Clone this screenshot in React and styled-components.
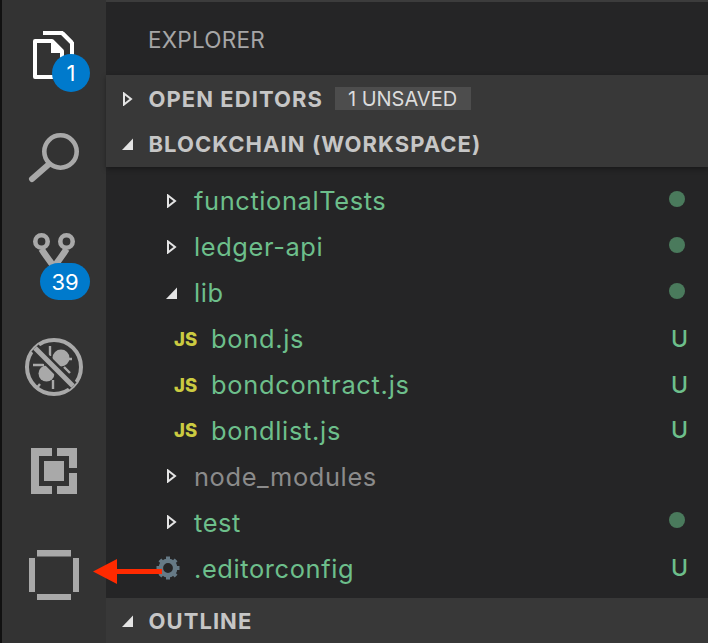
import React from "react";
import styled, { createGlobalStyle } from "styled-components";

const Global = createGlobalStyle`
  html, body { margin: 0; padding: 0; width: 708px; height: 643px; overflow: hidden; background: #252526; }
  #root { width: 708px; height: 643px; }
  * { box-sizing: border-box; }
`;

const Window = styled.div`
  position: relative;
  display: flex;
  width: 708px;
  height: 643px;
  font-family: Inter, "Liberation Sans", sans-serif;
`;

const ActivityBar = styled.nav`
  width: 106px;
  height: 100%;
  flex: none;
  background: #333333;
  border-left: 2px solid #111111;
  margin: 0;
  padding-top: 3px;
  display: flex;
  flex-direction: column;
`;

const ActivityItem = styled.div`
  position: relative;
  height: 104px;
  flex: none;
  margin-left: -2px;
`;

const Glyph = styled.svg`
  position: absolute;
  left: 23px;
  top: 22px;
  width: 60px;
  height: 60px;
  display: block;
`;

const Badge = styled.span`
  position: absolute;
  left: ${(p) => p.$left}px;
  top: ${(p) => p.$top}px;
  width: ${(p) => p.$width}px;
  height: ${(p) => p.$height}px;
  border-radius: 19px;
  background: #007acc;
  color: #ffffff;
  font-size: 22px;
  display: flex;
  align-items: center;
  justify-content: center;
`;

const Sidebar = styled.aside`
  flex: 1;
  min-width: 0;
  height: 100%;
  background: #252526;
  border-top: 2px solid #3c3c3c;
  display: flex;
  flex-direction: column;
`;

const Title = styled.h1`
  margin: 0;
  height: 73px;
  flex: none;
  padding: 2px 0 0 42px;
  display: flex;
  align-items: center;
  font-size: 22.5px;
  font-weight: 400;
  letter-spacing: 0.25px;
  color: #a6a6a6;
`;

const SectionGroup = styled.div`
  background: #383838;
  flex: none;
  padding-top: 1px;
  box-shadow: 0 2px 5px rgba(0, 0, 0, 0.35);
`;

const SectionHeader = styled.div`
  height: 45.5px;
  display: flex;
  align-items: center;
  padding-left: 16px;
  font-size: 22px;
  font-weight: 700;
  letter-spacing: 1.05px;
  color: #c6c6c6;
  white-space: nowrap;
`;

const Twist = styled.svg`
  width: 11px;
  height: 14px;
  flex: none;
  display: block;
`;

const SectionName = styled.span`
  margin-left: 15.5px;
`;

const CountTag = styled.span`
  margin-left: 12px;
  width: 136px;
  height: 23px;
  background: #4d4d4d;
  color: #dcdcdc;
  font-size: 20px;
  font-weight: 400;
  letter-spacing: 0;
  display: flex;
  align-items: center;
  padding-left: 13px;
`;

const Tree = styled.ul`
  list-style: none;
  margin: 0;
  padding: 11px 0 0;
`;

const Row = styled.li`
  height: 45.9px;
  display: flex;
  align-items: center;
  padding-left: ${(p) => p.$indent}px;
  padding-right: 20px;
  font-size: 25.4px;
  letter-spacing: ${(p) => p.$tracking}px;
  color: ${(p) => (p.$muted ? "#8b8b8b" : "#6dbf8b")};
`;

const FolderTwist = styled.span`
  width: 28px;
  flex: none;
  display: flex;
`;

const JsIcon = styled.span`
  width: 37px;
  flex: none;
  margin-left: 1px;
  color: #cbcb41;
  font-size: 18.5px;
  font-weight: 800;
  letter-spacing: 0;
`;

const GearSlot = styled.svg`
  width: 24px;
  height: 24px;
  flex: none;
  margin-right: 14px;
  display: block;
`;

const Label = styled.span`
  flex: 1;
`;

const Dot = styled.span`
  width: 16px;
  height: 16px;
  border-radius: 50%;
  background: #4a7a5c;
  margin: -4px 3px 0 0;
`;

const Untracked = styled.span`
  font-size: 23px;
  font-weight: 500;
  letter-spacing: 0;
  color: #6dbf8b;
`;

const OutlineBar = styled.div`
  margin-top: auto;
  height: 45px;
  flex: none;
  background: #383838;
  display: flex;
  align-items: center;
  padding-left: 16px;
  font-size: 22px;
  font-weight: 700;
  letter-spacing: 1.05px;
  color: #c6c6c6;
`;

const Callout = styled.svg`
  position: absolute;
  left: 90px;
  top: 555px;
  width: 76px;
  height: 32px;
  pointer-events: none;
`;

const Closed = () => (
  <Twist viewBox="0 0 11 14">
    <path d="M2 1.5 L9 7 L2 12.5 Z" fill="none" stroke="#e4e4e4" strokeWidth="2" />
  </Twist>
);
const Open = () => (
  <Twist viewBox="0 0 11 14">
    <path d="M0 13 L11 13 L11 1.5 Z" fill="#e4e4e4" />
  </Twist>
);

const GREY = "#a9a9a9";

const FilesIcon = () => (
  <Glyph viewBox="23 25 60 60">
    <path d="M35 41 H52 L62 51 V77 H35 Z" fill="none" stroke="#fff" strokeWidth="4" strokeLinejoin="round" />
    <path d="M51 42 L62 53 H51 Z" fill="#fff" />
    <path d="M43 33 H62 L72 43 V56" fill="none" stroke="#fff" strokeWidth="4" />
    <path d="M60 32 L73 45 V41 L64 32 Z" fill="#fff" />
  </Glyph>
);
const SearchIcon = () => (
  <Glyph viewBox="23 129 60 60">
    <circle cx="60.5" cy="151.5" r="16.2" fill="none" stroke={GREY} strokeWidth="4.6" />
    <path d="M48 165 L32 179" stroke={GREY} strokeWidth="6" strokeLinecap="round" />
  </Glyph>
);
const GitIcon = () => (
  <Glyph viewBox="23 233 60 60">
    <circle cx="41.5" cy="241.5" r="6.2" fill="none" stroke={GREY} strokeWidth="4.6" />
    <circle cx="66.5" cy="241.5" r="6.2" fill="none" stroke={GREY} strokeWidth="4.6" />
    <path d="M41.5 249 L44 253 L54 267 L64 253 L66.5 249" fill="none" stroke={GREY} strokeWidth="6.5" />
  </Glyph>
);
const DebugIcon = () => (
  <Glyph viewBox="23 337 60 60">
    <circle cx="54" cy="367" r="27" fill="none" stroke={GREY} strokeWidth="4" />
    <g fill={GREY}>
      <circle cx="46.5" cy="373.5" r="8" />
      <circle cx="61" cy="358" r="8.5" />
    </g>
    <path d="M33 365 H44 M50 346 V356 M72 359 H63 M53 380 V389 M40 384 L36 389 M64 367 L70 373" stroke={GREY} strokeWidth="2.4" fill="none" />
    <path d="M35 348 L73 386" stroke="#333" strokeWidth="10" />
    <path d="M35 348 L73 386" stroke={GREY} strokeWidth="5" />
  </Glyph>
);
const ExtIcon = () => (
  <Glyph viewBox="23 441 60 60">
    <path
      fill={GREY}
      fillRule="evenodd"
      d="M31 448 H52 V456 H39 V486 H52 V494 H31 Z M57 448 H77 V468 H69 V456 H62 L57 456 Z M57 486 H69 V473 H77 V494 H57 Z M44 461 H64 V481 H44 Z"
    />
  </Glyph>
);
const SquareIcon = () => (
  <Glyph viewBox="23 545 60 60">
    <path fill={GREY} d="M37 550 H71 V556.5 H37 Z M37 594 H71 V600 H37 Z M29 558 H35 V592 H29 Z M73 558 H79 V592 H73 Z" />
  </Glyph>
);

const Gear = () => (
  <GearSlot viewBox="0 0 24 24">
    <circle cx="12" cy="12" r="7.2" fill="none" stroke="#667a86" strokeWidth="4.6" />
    <g stroke="#667a86" strokeWidth="4">
      <path d="M12 0.5 V4 M12 20 V23.5 M0.5 12 H4 M20 12 H23.5 M3.9 3.9 L6.3 6.3 M17.7 17.7 L20.1 20.1 M3.9 20.1 L6.3 17.7 M17.7 6.3 L20.1 3.9" />
    </g>
  </GearSlot>
);

const folders = {
  top: [
    { name: "functionalTests", open: false, dot: true },
    { name: "ledger-api", open: false, dot: true },
    { name: "lib", open: true, dot: true },
  ],
  bottom: [
    { name: "node_modules", open: false, muted: true },
    { name: "test", open: false, dot: true },
  ],
};
const scripts = ["bond.js", "bondcontract.js", "bondlist.js"];

const Folder = ({ name, open, dot, muted }) => (
  <Row $indent={60} $muted={muted} $tracking={0.62}>
    <FolderTwist>{open ? <Open /> : <Closed />}</FolderTwist>
    <Label>{name}</Label>
    {dot && <Dot />}
  </Row>
);

export default function App() {
  return (
    <>
      <Global />
      <Window>
        <ActivityBar>
          <ActivityItem>
            <FilesIcon />
            <Badge $left={52} $top={51} $width={38} $height={38}>1</Badge>
          </ActivityItem>
          <ActivityItem>
            <SearchIcon />
          </ActivityItem>
          <ActivityItem>
            <GitIcon />
            <Badge $left={40} $top={52} $width={50} $height={37}>39</Badge>
          </ActivityItem>
          <ActivityItem>
            <DebugIcon />
          </ActivityItem>
          <ActivityItem>
            <ExtIcon />
          </ActivityItem>
          <ActivityItem>
            <SquareIcon />
          </ActivityItem>
        </ActivityBar>
        <Sidebar>
          <Title>EXPLORER</Title>
          <SectionGroup>
            <SectionHeader>
              <Closed />
              <SectionName>OPEN EDITORS</SectionName>
              <CountTag>1 UNSAVED</CountTag>
            </SectionHeader>
            <SectionHeader>
              <Open />
              <SectionName>BLOCKCHAIN (WORKSPACE)</SectionName>
            </SectionHeader>
          </SectionGroup>
          <Tree>
            {folders.top.map((f) => (
              <Folder key={f.name} {...f} />
            ))}
            {scripts.map((s) => (
              <Row key={s} $indent={67} $tracking={0.72}>
                <JsIcon>JS</JsIcon>
                <Label>{s}</Label>
                <Untracked>U</Untracked>
              </Row>
            ))}
            {folders.bottom.map((f) => (
              <Folder key={f.name} {...f} />
            ))}
            <Row $indent={50} $tracking={0.62}>
              <Gear />
              <Label>.editorconfig</Label>
              <Untracked>U</Untracked>
            </Row>
          </Tree>
          <OutlineBar>
            <Open />
            <SectionName>OUTLINE</SectionName>
          </OutlineBar>
        </Sidebar>
        <Callout viewBox="90 555 76 32">
          <path d="M93 571.5 L117 559 V569 H162 V574 H117 V584 Z" fill="#ff2a00" />
        </Callout>
      </Window>
    </>
  );
}
